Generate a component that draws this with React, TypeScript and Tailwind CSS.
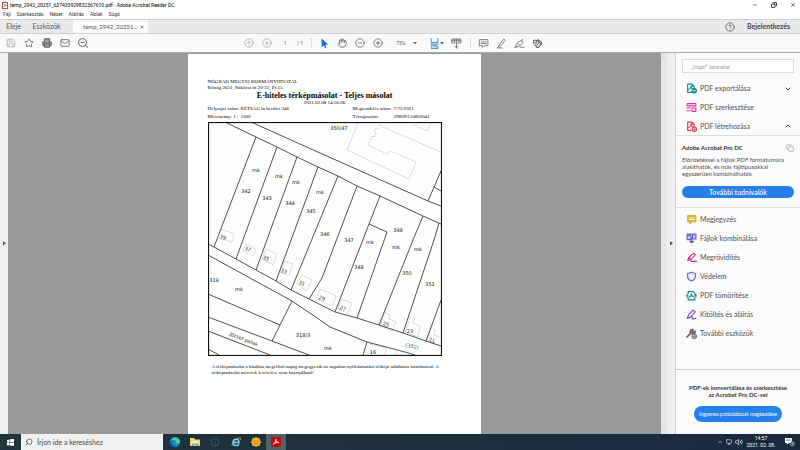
import type { ReactNode } from "react";
import {
  ArrowDownCircle,
  ArrowUpCircle,
  ChevronDown,
  ChevronUp,
  CircleHelp,
  CircleMinus,
  CirclePlus,
  Copy,
  Hand,
  Mail,
  Minus,
  Monitor,
  Printer,
  Save,
  Search,
  Star,
  Volume2,
  X,
  ZoomOut,
} from "lucide-react";

const menus = ["Fájl", "Szerkesztés", "Nézet", "Aláírás", "Ablak", "Súgó"];

// parcel borders, map units
const borders = [
  "M225 122L256 137L277 147L297 157L318 167L338 176L357 186L380 196L423 216L441 224",
  "M251 122L320 153L428 201L441 206",
  "M441 171L434 187L428 201M434 187L441 191",
  "M256 137L214 247",
  "M277 147L236 259",
  "M297 157L256 270",
  "M318 167L276 281",
  "M338 176L291 290",
  "M357 186L322 278L309 299",
  "M380 196L369 224L335 312",
  "M369 224L387 232L357 318",
  "M423 216L413 240L379 325",
  "M439 223L434 240L403 333",
  "M441 300L426 341",
  "M208 244L214 247L236 259L256 270L276 281L291 290L309 299L335 312L357 318L379 325L403 333L426 341L441 346",
  "M208 255L250 278L292 301L320 320L330 327L367 342L405 352L415 355",
  "M367 342L363 355",
  "M292 301L272 341",
  "M208 294L280 325",
  "M208 317L272 341L309 355",
  "M208 331L270 355",
  "M208 349L219 355",
];

const buildings = [
  "M358 123L347 150L409 179L416 162L390 151L387 154L368 145L372 136L375 137L376 133L374 131L376 128L379 129",
  "M378 125L441 152",
  "M412 124L427 131L431 123",
  "M221 229L234 234L232 242L219 238",
  "M246 244L256 249L253 256L243 251Z",
  "M266 249L277 254L273 265L262 259Z",
  "M285 261L293 264L289 276L280 272Z",
  "M302 275L312 280L307 291L297 284Z",
  "M320 289L336 296L332 306L316 299Z",
  "M341 299L352 303L348 313L338 309Z",
  "M385 312L390 315L389 319L396 322L392 331L380 326Z",
  "M411 316L415 318L413 323L420 326L418 337L405 332Z",
  "M431 328L435 330L434 335L440 337M426 341L431 328",
  "M370 344L386 348L385 355M397 351L395 355",
];

const parcels: [number, number, string][] = [
  [339, 130, "350/47"],
  [256, 172, "mk"],
  [246, 193, "342"],
  [279, 178, "mk"],
  [267, 200, "343"],
  [296, 184, "mk"],
  [290, 205, "344"],
  [320, 194, "mk"],
  [311, 213, "345"],
  [325, 236, "346"],
  [349, 242, "347"],
  [370, 244, "mk"],
  [359, 269, "348"],
  [398, 232, "349"],
  [396, 249, "mk"],
  [418, 251, "mk"],
  [407, 275, "350"],
  [430, 286, "351"],
  [214, 282, "319"],
  [239, 291, "mk"],
  [303, 337, "318/3"],
  [328, 350, "mk"],
  [373, 354, "16"],
];

const houses: [number, number, string, number][] = [
  [223, 239, "39", 22],
  [248, 251, "37", 22],
  [266, 260, "35", 22],
  [284, 273, "33", 22],
  [302, 285, "31", 22],
  [322, 300, "29", 22],
  [343, 310, "27", 22],
  [386, 326, "25", 15],
  [410, 333, "23", 0],
  [432, 342, "21", 15],
  [412, 348, "(332)", 12],
  [244, 341, "József patak", 22],
];

function ParcelMap() {
  return (
    <svg viewBox="208 122 234 234" className="block w-full" role="img" aria-label="Térképmásolat">
      <rect x="208" y="122" width="234" height="234" fill="#fdfffd" />
      <g fill="none" stroke="#aaa" strokeWidth=".6" strokeDasharray="1.5 .7">
        {buildings.map((d) => (
          <path key={d} d={d} />
        ))}
      </g>
      <g fill="none" stroke="#222" strokeWidth=".8">
        {borders.map((d) => (
          <path key={d} d={d} />
        ))}
      </g>
      <rect x="208.5" y="122.5" width="233" height="233" fill="none" stroke="#111" strokeWidth="1.2" />
      <g fontFamily="'DejaVu Sans', sans-serif" fontSize="5" fill="#111" textAnchor="middle">
        {parcels.map(([x, y, t]) => (
          <text key={t + x} x={x} y={y}>
            {t}
          </text>
        ))}
        {houses.map(([x, y, t, r]) => (
          <text key={t} x={x} y={y} fill="#333" transform={`rotate(${r} ${x} ${y - 2})`}>
            {t}
          </text>
        ))}
      </g>
    </svg>
  );
}

function Glyph({ color = "#666", children }: { color?: string; children: ReactNode }) {
  return (
    <svg
      viewBox="0 0 20 20"
      className="size-[11px] shrink-0"
      fill="none"
      stroke={color}
      strokeWidth="2"
      strokeLinejoin="round"
      strokeLinecap="round"
      aria-hidden="true"
    >
      {children}
    </svg>
  );
}

function ToolButton({ label, children }: { label: string; children: ReactNode }) {
  return (
    <button type="button" aria-label={label} className="flex size-3 shrink-0 items-center justify-center text-[#666]">
      {children}
    </button>
  );
}

const exportIcon = (
  <Glyph color="#128a99">
    <path d="M10 17H3V2h8l4 4v4M11 2v4h4M5 12c4-2 4-6 4-6s0 4 4 5" />
    <circle cx="15" cy="14" r="4" fill="#128a99" />
    <path d="M13 14h4" stroke="#fff" strokeWidth="1.5" />
  </Glyph>
);

const editIcon = (
  <Glyph color="#d13ba0">
    <path d="M2 3h16v4H2zM2 11h6M2 16h6M11 11h7v6h-7z" />
  </Glyph>
);

const createIcon = (
  <Glyph color="#dc3d4b">
    <path d="M9 17H3V2h8l4 4v4M11 2v4h4M5 12c4-2 4-6 4-6s0 4 4 5" />
    <circle cx="15" cy="15" r="4" fill="#fff" />
    <path d="M15 13v4M13 15h4" strokeWidth="1.5" />
  </Glyph>
);

const tools: { label: string; icon: ReactNode }[] = [
  {
    label: "Megjegyzés",
    icon: (
      <Glyph color="#d5b82c">
        <path d="M3 3h15v11h-7l-4 4v-4H3z" fill="#d5b82c" />
        <path d="M6 7h9M6 10h9" stroke="#fff" strokeWidth="1.5" />
      </Glyph>
    ),
  },
  {
    label: "Fájlok kombinálása",
    icon: (
      <Glyph color="#5b5ac8">
        <path d="M2 2h7v10H2zM12 2h6v9h-6z" fill="#c9c9f3" />
        <path d="M4 5h3M7 15h7M10 8v10M7 15l3 3 4-3" />
      </Glyph>
    ),
  },
  {
    label: "Megrövidítés",
    icon: (
      <Glyph color="#cf2d72">
        <path d="M3 16l2-6 9-8 3 3-8 9-6 2zM5 10l4 4M9 17h10" />
      </Glyph>
    ),
  },
  {
    label: "Védelem",
    icon: (
      <Glyph color="#6361c7">
        <path d="M10 2c2 2 5 2 7 2v6c0 4-3 7-7 8-4-1-7-4-7-8V4c2 0 5 0 7-2z" fill="#eeeefd" />
      </Glyph>
    ),
  },
  {
    label: "PDF tömörítése",
    icon: (
      <Glyph color="#168d86">
        <path d="M4 7V3h9l3 3v3M4 14v4h12v-4M2 8v5M18 8v5" />
        <path d="M6 13c4-1 4-6 4-6s0 5 4 5M2 10l2 1M18 10l-2 1" />
      </Glyph>
    ),
  },
  {
    label: "Kitöltés és aláírás",
    icon: (
      <Glyph color="#8148c5">
        <path d="M2 17l3-7 8-8 4 3-8 9-7 3c6 0 7-4 9-3s-1 4 1 4 2-1 6-1" />
      </Glyph>
    ),
  },
  {
    label: "További eszközök",
    icon: (
      <Glyph color="#666">
        <path d="M2 16l7-7M8 8c-1-4 3-6 5-5l-2 3 3 2 3-2c0 3-3 5-6 4" strokeWidth="3" />
        <circle cx="15" cy="15" r="4" fill="#fff" />
        <path d="M15 13v4M13 15h4" strokeWidth="1.5" />
      </Glyph>
    ),
  },
];

function AcrobatMark() {
  return (
    <svg viewBox="0 0 20 20" className="size-full" fill="none" stroke="currentColor" strokeWidth="2" aria-hidden="true">
      <path d="M3 16c4-2 8-8 7-13-3 2 3 10 7 9 1-4-9-1-14 4z" />
    </svg>
  );
}

function WindowHeader() {
  return (
    <header className="shrink-0 bg-white">
      <div className="flex h-[10px] items-center px-0.5 text-[5px] text-black">
        <span className="flex h-[7px] w-1.5 shrink-0 items-center justify-center border border-[#c94b50] text-[#b8151d]">
          <AcrobatMark />
        </span>
        <span className="ml-0.5">temp_2942_20251_637433929832367610.pdf - Adobe Acrobat Reader DC</span>
        <div className="ml-auto flex gap-[13px] pr-0.5">
          <button type="button" aria-label="Kis méret">
            <Minus className="size-1.5" />
          </button>
          <button type="button" aria-label="Előző méret">
            <Copy className="size-1.5 -scale-x-100" strokeWidth={3} />
          </button>
          <button type="button" aria-label="Bezárás">
            <X className="size-1.5" />
          </button>
        </div>
      </div>
      <nav className="flex h-[9px] items-center gap-[6px] px-[3px] text-[5px] text-[#333]">
        {menus.map((m) => (
          <button key={m} type="button">
            {m}
          </button>
        ))}
      </nav>
    </header>
  );
}

function TabBar() {
  return (
    <div className="flex h-[15px] shrink-0 items-stretch border-y border-[#d0d0d0] bg-[#e9e9e9] font-['Lato','Noto_Sans',sans-serif] text-[7px] text-[#555]">
      <button type="button" className="w-[27px]">
        Eleje
      </button>
      <button type="button" className="w-[39px]">
        Eszközök
      </button>
      <div className="ml-[7px] flex w-[75px] items-center justify-between bg-[#fafafa] pr-1 pl-[10px] text-[6px]">
        <span>temp_2942_20251...</span>
        <button type="button" aria-label="Lap bezárása">
          <X className="size-1" strokeWidth={4} />
        </button>
      </div>
      <div className="ml-auto flex items-center gap-3 pr-2.5">
        <button type="button" aria-label="Súgó">
          <CircleHelp className="size-2.5" />
        </button>
        <button type="button" className="font-bold text-[#444]">
          Bejelentkezés
        </button>
      </div>
    </div>
  );
}

function Toolbar() {
  return (
    <div className="flex h-[19px] shrink-0 items-center border-b border-[#aaa] bg-[#fafafa] px-[5px] text-[5px] text-[#555]">
      <div className="flex gap-[6px]">
        <ToolButton label="Mentés">
          <Save className="size-2.5 text-[#aaa]" />
        </ToolButton>
        <ToolButton label="Csillag">
          <Star className="size-2.5" />
        </ToolButton>
        <ToolButton label="Nyomtatás">
          <Printer className="size-2.5 fill-[#aaa]" strokeWidth={3} />
        </ToolButton>
        <ToolButton label="Küldés">
          <Mail className="size-2.5" />
        </ToolButton>
        <ToolButton label="Keresés">
          <ZoomOut className="size-3" />
        </ToolButton>
      </div>
      <div className="ml-[19.5%] flex items-center gap-[6px]">
        <ToolButton label="Előző oldal">
          <ArrowUpCircle className="size-2.5 text-[#aaa]" />
        </ToolButton>
        <ToolButton label="Következő oldal">
          <ArrowDownCircle className="size-2.5 text-[#aaa]" />
        </ToolButton>
        <input aria-label="Oldalszám" defaultValue="1" className="w-3 min-w-0 bg-transparent text-center text-[5px]" />
        <span>/ 1</span>
        <span className="ml-0.5 h-2.5 w-px bg-[#ddd]" />
        <ToolButton label="Kijelölés">
          <svg viewBox="0 0 20 20" className="size-3 fill-[#1473d0]" aria-hidden="true">
            <path d="M6 2v15l4-3 2 5 2-1-2-5h5z" />
          </svg>
        </ToolButton>
        <ToolButton label="Kéz">
          <Hand className="size-2.5" />
        </ToolButton>
        <ToolButton label="Kicsinyítés">
          <CircleMinus className="size-2.5" />
        </ToolButton>
        <ToolButton label="Nagyítás">
          <CirclePlus className="size-2.5" />
        </ToolButton>
        <button type="button" className="ml-1.5 flex items-center gap-2">
          75%
          <svg viewBox="0 0 6 4" className="w-1 fill-[#777]" aria-hidden="true">
            <path d="M0 0h6L3 4z" />
          </svg>
        </button>
        <button type="button" aria-label="Ablakhoz igazítás" className="ml-1.5 flex items-center">
          <Glyph color="#1779c4">
            <path d="M4 1v7h12V1M3 11h14M5 19v-6h8l3 3v3H5zM13 14v3M9 15v2" strokeWidth="1.5" />
          </Glyph>
          <svg viewBox="0 0 6 4" className="w-1 fill-[#1779c4]" aria-hidden="true">
            <path d="M0 0h6L3 4z" />
          </svg>
        </button>
        <ToolButton label="Görgetés">
          <Glyph>
            <path d="M2 2h16v7H2zM2 5h16M6 2v4M10 2v4M14 2v4M10 9v9M7 15l3 3 3-3" strokeWidth="1.5" />
          </Glyph>
        </ToolButton>
        <span className="ml-0.5 h-2.5 w-px bg-[#ddd]" />
        <ToolButton label="Megjegyzés">
          <Glyph>
            <path d="M3 3h15v11h-7l-3 3v-3H3zM6 7h9M6 10h9" strokeWidth="1.5" />
          </Glyph>
        </ToolButton>
        <ToolButton label="Kiemelés">
          <Glyph>
            <path d="M6 12l8-10 3 2-8 10-4 1zM5 15l-3 3h9" strokeWidth="1.5" />
          </Glyph>
        </ToolButton>
        <ToolButton label="Aláírás">
          <Glyph>
            <path d="M2 17l5-9 7-4 2 5-6 6-8 2zM7 10l4 4M12 17h6M14 4l2-2" strokeWidth="1.5" />
          </Glyph>
        </ToolButton>
        <ToolButton label="Bélyegző">
          <Glyph>
            <path d="M3 4h5v5H3zM10 4c6 0 9 4 7 8M5 12l4 5h3l5-6-4-3-4 5M12 3l-2 2 3 2" />
          </Glyph>
        </ToolButton>
      </div>
    </div>
  );
}

function DocumentPage() {
  return (
    <article className="w-[45%] self-stretch bg-white px-5 pt-[25px] font-['Liberation_Serif',serif] text-[5px] leading-[6px] text-black">
      <div className="w-[234px] max-w-full">
        <p>NÓGRÁD MEGYEI KORMÁNYHIVATAL</p>
        <p>Rétság 2651, Rákóczi út 20-22, Pf.15.</p>
        <h1 className="text-center text-[8px] leading-[9px] font-bold whitespace-nowrap">
          E-hiteles térképmásolat - Teljes másolat
        </h1>
        <p className="text-center leading-[5px]">2021.02.08 14:56:06</p>
        <dl className="mb-px grid grid-cols-[33px_112px_41px_1fr] leading-[8px] whitespace-nowrap">
          <dt>Helyrajzi szám:</dt>
          <dd>RÉTSÁG belterület 346</dd>
          <dt>Megrendelés szám:</dt>
          <dd>7/72/2021</dd>
          <dt>Méretarány: 1 :</dt>
          <dd>1000</dd>
          <dt>Térrajzszám:</dt>
          <dd>2980N150803041</dd>
        </dl>
        <ParcelMap />
        <p className="mt-[8px] pl-1 whitespace-nowrap">
          A térképmásolat a kiadása megelőző napig megegyezik az ingatlan-nyilvántartási térképi adatbázis tartalmával. A
          <br />
          térképmásolat méretek levételére nem használható!
        </p>
      </div>
    </article>
  );
}

function SidePanel() {
  return (
    <aside className="flex w-[125px] shrink-0 flex-col border-l border-[#ccc] bg-[#fbfbfb] font-['Lato','Noto_Sans',sans-serif] text-[7px] text-[#505050]">
      <div className="px-1.5 pt-[6px]">
        <input
          type="search"
          aria-label="Eszközök keresése"
          placeholder="„Vízjel” keresése"
          className="block h-[14px] w-full border border-[#ddd] bg-white px-2 text-[6px] italic placeholder:text-[#999]"
        />
      </div>
      <div className="mt-[6px] flex flex-col border-b border-[#ddd] pr-2 pl-[10px]">
        <button type="button" className="flex h-[19px] items-center gap-[3px]">
          {exportIcon}
          PDF exportálása
          <ChevronDown className="ml-auto size-2" strokeWidth={3} />
        </button>
        <button type="button" className="flex h-[19px] items-center gap-[3px]">
          {editIcon}
          PDF szerkesztése
        </button>
        <button type="button" className="flex h-[18px] items-center gap-[3px]">
          {createIcon}
          PDF létrehozása
          <ChevronUp className="ml-auto size-2" strokeWidth={3} />
        </button>
      </div>
      <section className="border-b border-[#ddd] px-1.5 pt-[7px] pb-[9px]">
        <div className="flex items-center justify-between">
          <h2 className="text-[6px] leading-[10px] font-bold text-[#333]">Adobe Acrobat Pro DC</h2>
          <Copy className="size-2 text-[#999]" />
        </div>
        <p className="mt-[3px] text-[6px] leading-[7px]">
          Előrizetéssel a fájlok PDF formátumúra
          <br />
          alakíthatók, és más fájltípusokkal
          <br />
          egyszerűen kombinálhatók
        </p>
        <button type="button" className="mt-[9px] block h-3 w-full rounded-full bg-[#2680eb] leading-none font-medium text-white">
          További tudnivalók
        </button>
      </section>
      <ul className="pt-[2px]">
        {tools.map((t) => (
          <li key={t.label}>
            <button type="button" className="flex h-[19px] items-center gap-[3px] px-[10px]">
              {t.icon}
              {t.label}
            </button>
          </li>
        ))}
      </ul>
      <footer className="mt-auto border-t border-[#ccc] px-2 pt-[14px] pb-3 text-center">
        <p className="text-[6px] leading-[7px] font-bold whitespace-nowrap text-[#333]">
          PDF-ek konvertálása és szerkesztése
          <br />
          az Acrobat Pro DC-vel
        </p>
        <button type="button" className="mt-2 h-4 rounded-full bg-[#2680eb] px-[5px] text-[5px] whitespace-nowrap text-white">
          Ingyenes próbaidőszak megkezdése
        </button>
      </footer>
    </aside>
  );
}

function Taskbar() {
  return (
    <footer className="flex h-4 shrink-0 items-stretch bg-[linear-gradient(90deg,#20353d,#17293d)] text-white">
      <button type="button" aria-label="Start" className="flex w-[21px] items-center justify-center">
        <svg viewBox="0 0 8 8" className="size-[7px] fill-white" aria-hidden="true">
          <path d="M0 1l3-.5v3H0zM3.5.4L8 0v3.5H3.5zM0 4h3v3.5L0 7zM3.5 4H8v4l-4.5-.5z" />
        </svg>
      </button>
      <label className="flex w-[142px] items-center gap-1 bg-[#f1f1f1] px-1 font-['Lato','Noto_Sans',sans-serif] text-[#333]">
        <Search className="size-2 -scale-x-100" />
        <input
          aria-label="Keresés"
          placeholder="Írjon ide a kereséshez"
          className="min-w-0 flex-1 bg-transparent text-[7px] placeholder:text-[#444]"
        />
      </label>
      <div className="flex">
        <button type="button" aria-label="Edge" className="flex w-[23px] items-center justify-center">
          <svg viewBox="0 0 20 20" className="size-2.5" aria-hidden="true">
            <circle cx="10" cy="10" r="10" fill="#1591d1" />
            <path d="M1 8C4-2 19-1 20 9c0 5-7 5-8 3 3-5-5-8-11-4z" fill="#4bcf8c" />
            <path d="M5 9c-2 6 3 10 10 9-9 5-16-2-14-9 1-2 5-3 8-1-2 0-4 0-4 1z" fill="#1262ad" />
          </svg>
        </button>
        <button type="button" aria-label="Fájlkezelő" className="flex w-[18px] items-center justify-center">
          <svg viewBox="0 0 20 18" className="size-2.5" aria-hidden="true">
            <path d="M0 1h8l2 3h10v13H0z" fill="#f6d064" />
            <path d="M3 7h14v6H3z" fill="#fff3bd" />
            <path d="M4 12h12v5h-3v-3H7v3H4z" fill="#4ba4d8" />
          </svg>
        </button>
        <button type="button" aria-label="Információ" className="flex w-[22px] items-center justify-center">
          <svg viewBox="0 0 20 20" className="size-2.5" fill="none" stroke="#315a70" strokeWidth="2" aria-hidden="true">
            <circle cx="10" cy="10" r="8" />
            <path d="M10 5v1M10 9v6" />
          </svg>
        </button>
        <button type="button" aria-label="Internet Explorer" className="flex w-5 items-center justify-center">
          <svg viewBox="0 0 20 20" className="size-2.5" fill="none" stroke="#75cff5" aria-hidden="true">
            <path d="M4 11h12c0-9-12-9-12 0 0 7 9 8 12 3" strokeWidth="3" />
            <path d="M3 17C-2 19 10 1 18 2c2 0 1 3 0 4" stroke="#f2d26a" strokeWidth="1.5" />
          </svg>
        </button>
        <button type="button" aria-label="Időjárás" className="flex w-5 items-center justify-center">
          <svg viewBox="0 0 20 20" className="size-2.5" aria-hidden="true">
            <path d="M10 0l3 2 4 0 1 4 2 4-2 4-1 4h-4l-3 2-3-2H3l-1-4-2-4 2-4 1-4h4z" fill="#f6ae26" />
            <path d="M5 8h3M12 8h3M6 12c2 3 6 3 8 0" stroke="#9b5712" strokeWidth="1.5" fill="none" />
          </svg>
        </button>
        <button type="button" aria-label="Acrobat Reader" className="flex w-5 items-center justify-center bg-[#536066]">
          <span className="flex size-2.5 items-center justify-center rounded-xs bg-[#b80b0b] p-px">
            <AcrobatMark />
          </span>
        </button>
      </div>
      <div className="ml-auto flex items-center gap-[3px] pr-[5px]">
        <ChevronUp className="size-1.5" />
        <Monitor className="size-1.5" />
        <Volume2 className="size-2" />
        <time className="w-[30px] text-center text-[5px] leading-[7px] whitespace-nowrap">
          14:57
          <br />
          2021. 02. 08.
        </time>
        <button type="button" aria-label="Értesítések" className="ml-1.5">
          <svg viewBox="0 0 22 20" className="size-2.5" aria-hidden="true">
            <path d="M0 1h15v11H8l-4 4v-4H0z" fill="#fff" />
            <path d="M3 4h9M3 7h9" stroke="#17293d" />
            <circle cx="16" cy="14" r="5" fill="#26394b" stroke="#ddd" />
            <path d="M18 14h-4l3-3v6" stroke="#fff" fill="none" />
          </svg>
        </button>
      </div>
    </footer>
  );
}

export default function App() {
  return (
    <div className="flex min-h-screen flex-col bg-white font-['Roboto','Noto_Sans',sans-serif] leading-none">
      <WindowHeader />
      <TabBar />
      <Toolbar />
      <main className="flex flex-1 items-stretch">
        <button type="button" aria-label="Bal panel megnyitása" className="flex w-2 shrink-0 items-center justify-center bg-[#efefef]">
          <svg viewBox="0 0 4 6" className="w-[3px] fill-[#555]" aria-hidden="true">
            <path d="M0 0l4 3-4 3z" />
          </svg>
        </button>
        <div className="flex flex-1 justify-center bg-[#999] pt-px">
          <DocumentPage />
        </div>
        <div className="flex w-1.5 shrink-0 flex-col items-center justify-between bg-[#e6e6e6] py-0.5">
          <ChevronUp className="size-1 text-[#888]" />
          <ChevronDown className="size-1 text-[#888]" />
        </div>
        <button type="button" aria-label="Jobb panel elrejtése" className="flex w-2 shrink-0 items-center justify-center bg-[#efefef]">
          <svg viewBox="0 0 4 6" className="w-[3px] fill-[#555]" aria-hidden="true">
            <path d="M0 0l4 3-4 3z" />
          </svg>
        </button>
        <SidePanel />
      </main>
      <Taskbar />
    </div>
  );
}
